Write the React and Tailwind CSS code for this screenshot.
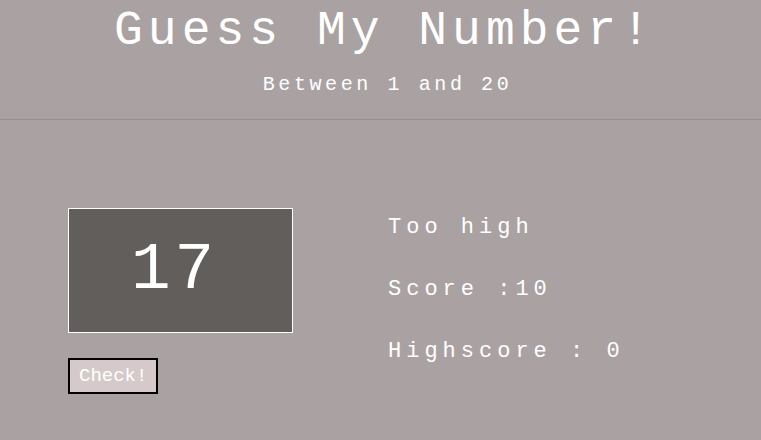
import React, { useState } from "react";

export default function App() {
  const [guess] = useState(17);
  const [message] = useState("Too high");
  const [score] = useState(10);
  const [highscore] = useState(0);

  return (
    <div
      className="min-h-screen w-full bg-[#aaa2a2] text-white"
      style={{ fontFamily: '"Liberation Mono", "Courier New", monospace' }}
    >
      <header className="border-b border-[#968f8f] pl-[8px] pb-[22px] text-center">
        <h1 className="pt-[3px] text-[48px] leading-[56px] tracking-[5px]">Guess My Number!</h1>
        <p className="mt-[14px] pl-[6px] text-[20px] leading-[24px] tracking-[3.6px]">Between 1 and 20</p>
      </header>

      <main className="flex pt-[88px] pl-[68px]">
        <div className="flex w-[320px] flex-col items-start">
          <div className="flex h-[125px] w-[225px] items-center border border-white bg-[#625e5c] pl-[62px]">
            <span className="text-[66px] leading-none tracking-[4px]">{guess}</span>
          </div>
          <button className="mt-[25px] border-2 border-black bg-[#d5c9c9] px-[9px] py-[4px] text-[19px] leading-[24px] text-white">
            Check!
          </button>
        </div>

        <div className="flex flex-col gap-[36px] pt-[7px] text-[22px] leading-[26px] tracking-[5px]">
          <p>{message}</p>
          <p>Score :{score}</p>
          <p>Highscore : {highscore}</p>
        </div>
      </main>
    </div>
  );
}
